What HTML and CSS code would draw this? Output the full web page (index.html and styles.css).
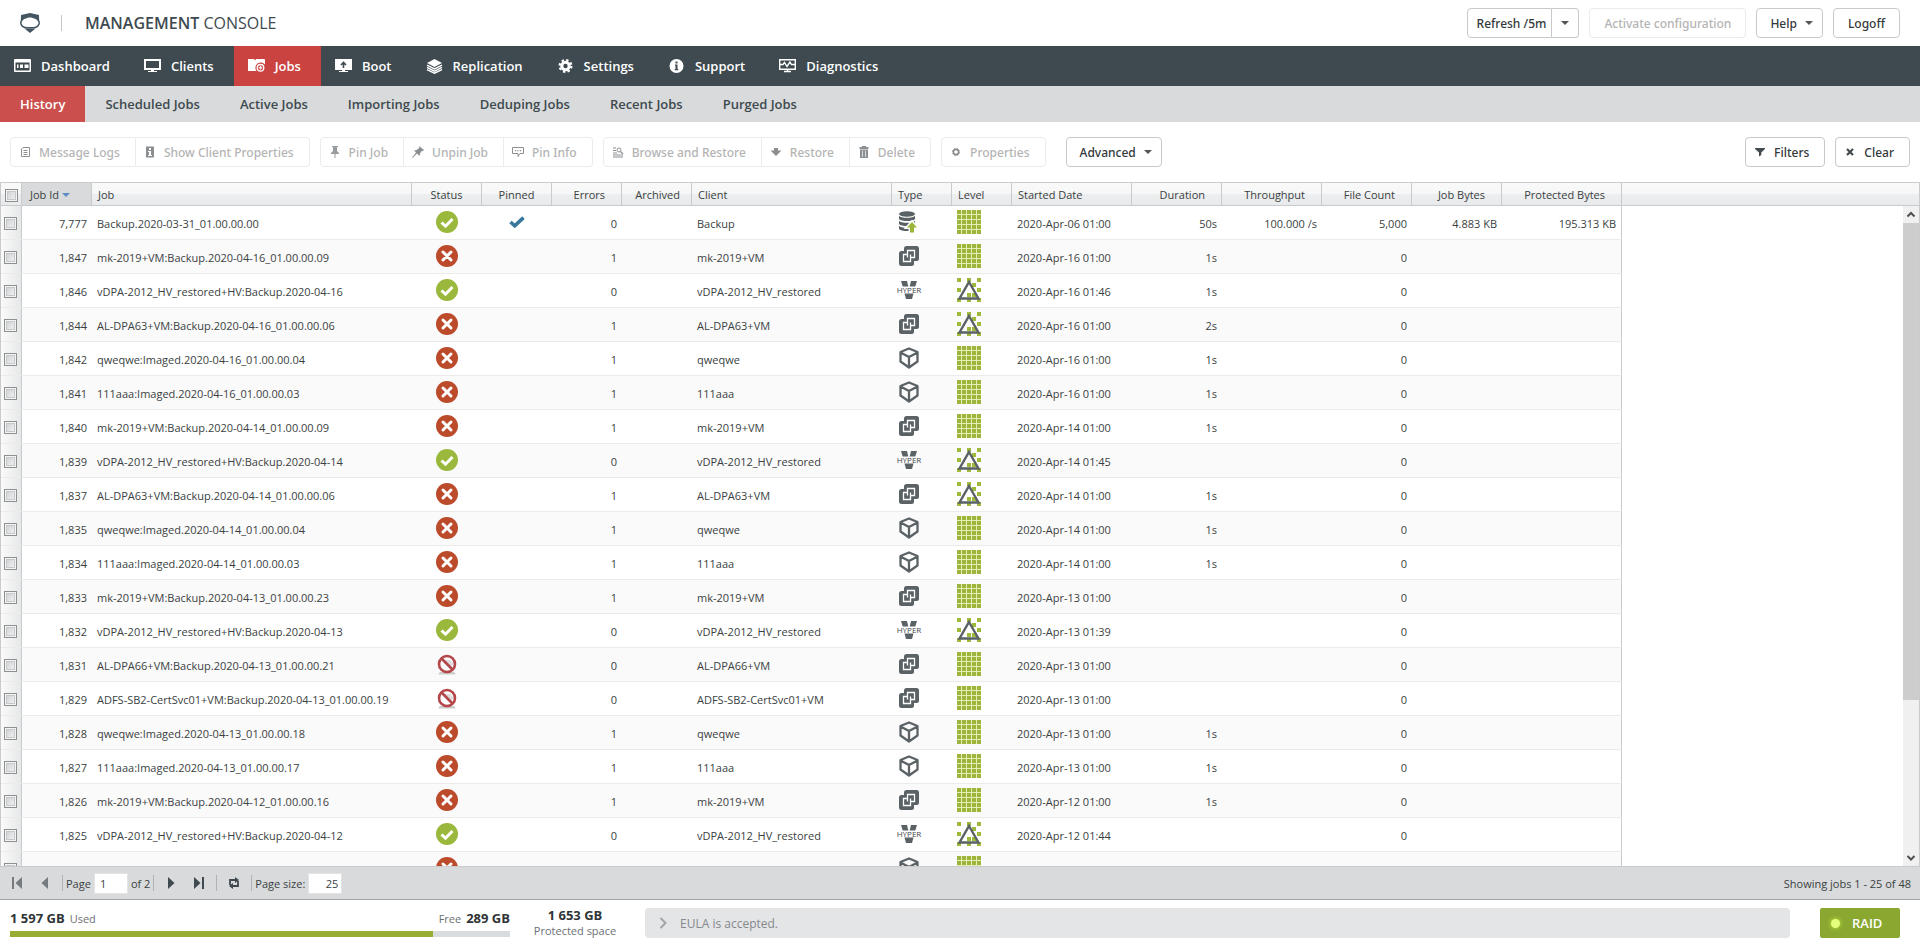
FILE: index.html
```html
<!DOCTYPE html>
<html lang="en">
<head>
  <meta charset="UTF-8" />
  <meta name="viewport" content="width=device-width, initial-scale=1.0" />
  <title>Management Console</title>
  <link rel="stylesheet" href="styles.css">
</head>
<body>

  <!-- shared icons -->
  <svg class="sprite" aria-hidden="true">
    <symbol id="i-ok" viewBox="0 0 22 22">
      <circle cx="11" cy="11" r="11" fill="#9ab83c"/>
      <path d="M5.5 11.5 9.5 15.2 16.5 8" fill="none" stroke="#fff" stroke-width="3"/>
    </symbol>
    <symbol id="i-fail" viewBox="0 0 22 22">
      <circle cx="11" cy="11" r="11" fill="#bb4b2a"/>
      <path d="M7 7l8 8M15 7l-8 8" fill="none" stroke="#fff" stroke-width="3" stroke-linecap="round"/>
    </symbol>
    <symbol id="i-cancel" viewBox="0 0 22 22">
      <path d="M2.5 21.5c0-2 2-3 4-3h9c2 0 4 1 4 3z" fill="#ccc"/>
      <path d="M8 7h6l4 4-5 4z" fill="#ddd"/>
      <circle cx="11" cy="11" r="8" fill="none" stroke="#b5474a" stroke-width="2.6"/>
      <path d="M5.5 5.5l11 11" stroke="#b5474a" stroke-width="2.6"/>
    </symbol>
    <symbol id="i-pinned" viewBox="0 0 16 12">
      <path d="M1.5 6 5.7 9.8 14.5 1.6" fill="none" stroke="#37789c" stroke-width="3.6"/>
    </symbol>
    <symbol id="i-db" viewBox="0 0 22 22">
      <g fill="#5a6266">
        <ellipse cx="9" cy="3" rx="8" ry="2.8"/>
        <path d="M1 4.800c2 2.700 14 2.700 16 0v3.200c-2 2.800-14 2.800-16 0z"/>
        <path d="M1 9.800c2 2.700 14 2.700 16 0v3.200c-2 2.800-14 2.800-16 0z"/>
        <path d="M1 14.800c2 2.700 14 2.700 16 0v3.200c-2 2.800-14 2.800-16 0z"/>
      </g>
      <path d="M14 11l5 5.500h-3v5h-4v-5H9z" fill="#9cb536" stroke="#fff" stroke-width="3" paint-order="stroke"/>
    </symbol>
    <symbol id="i-vm" viewBox="0 0 22 22">
      <rect x="6" y="1" width="15" height="15" rx="2.500" fill="#5a6266"/>
      <rect x="1" y="6" width="15" height="15" rx="2.500" fill="#5a6266"/>
      <path d="M9.500 12.500v-7h7v7h-4M12.500 9.500v7h-7v-7h4" fill="none" stroke="#fff" stroke-width="1.300"/>
    </symbol>
    <symbol id="i-hyper" viewBox="0 0 26 20">
      <path d="M5 1h6l1.300 5.500h1.400L15 1h6l-1.700 5.500H6.700zM8.500 13.500h9L16 19h-6z" fill="#5a6266"/>
      <text x="13" y="12.800" text-anchor="middle" font-size="8" fill="#3f474b">HYPER</text>
    </symbol>
    <symbol id="i-cube" viewBox="0 0 22 22">
      <path d="M11 1.500 19.500 5v9.500L11 20.500 2.500 14.500V5zM2.500 5.500 11 10l8.500-4.500M11 10v10.500" fill="none" stroke="#5a6266" stroke-width="2.300" stroke-linejoin="round"/>
    </symbol>
    <symbol id="i-full" viewBox="0 0 24 24">
      <path d="M0 0h24v24H0z" fill="#e3edb4"/>
      <path d="M0 2h24M0 7h24M0 12h24M0 17h24M0 22h24" stroke="#9db53c" stroke-width="4" stroke-dasharray="4 1"/>
    </symbol>
    <symbol id="i-diff" viewBox="0 0 24 24">
      <path d="M0 0h4v4H0zM10 0h4v4h-4zM20 0h4v4h-4zM0 10h4v4H0zM15 5h4v4h-4zM20 10h4v4h-4zM10 15h4v4h-4zM15 15h4v4h-4zM0 20h4v4H0zM10 20h4v4h-4zM20 20h4v4h-4z" fill="#9fb93b"/>
      <path d="M12 4 21.500 20.500H2.500z" fill="none" stroke="#5a6266" stroke-width="2.400"/>
    </symbol>
  </svg>

  <header class="top">
    <svg class="logo" viewBox="0 0 20 20" aria-hidden="true">
      <path d="M1 2 10 0l9 2 .2 6C17 8 16 5 14 5.500c-2-1.500-6-1.500-8 0C4 5 3 8 .8 8z" fill="#435560"/>
      <path d="M2 7C.8 8.500.6 10 1 11c.6 2 3 3.600 6 3.800h6c3-.2 5.400-1.800 6-3.800.4-1 .2-2.500-1-4" fill="none" stroke="#435560" stroke-width="1.500"/>
      <path d="M4.500 15.500h11L10 20z" fill="#435560"/>
    </svg>
    <span class="divider"></span>
    <h1><b>MANAGEMENT</b> CONSOLE</h1>
    <div class="top-actions">
      <div class="btn-group">
        <button class="btn refresh">Refresh /5m</button>
        <button class="btn split" aria-label="Refresh interval"><span class="caret"></span></button>
      </div>
      <button class="btn plain" disabled>Activate configuration</button>
      <button class="btn menu">Help <span class="caret"></span></button>
      <button class="btn plain">Logoff</button>
    </div>
  </header>

  <nav class="nav">
    <a href="#"><svg viewBox="0 0 17 16"><path fill="#fff" fill-rule="evenodd" d="M1 1h15q1 0 1 1v11q0 1-1 1H1q-1 0-1-1V2q0-1 1-1zm.5 3.500v8h14v-8z"/><path fill="#fff" d="M3 6.500h1.500V10H3zM6 6.500h3V10H6zM10.500 6.500h4V10h-4z"/></svg>Dashboard</a>
    <a href="#"><svg viewBox="0 0 17 16"><path fill="#fff" fill-rule="evenodd" d="M0 1h17v11H0zm2 2v7h13V3zM4 13h9v1H4z"/><path fill="#fff" d="M7 12h3v2H7z"/></svg>Clients</a>
    <a href="#" class="active"><svg viewBox="0 0 17 16"><path fill="#fff" d="M0 1h6l1 1.500L8 1h8q1 0 1 1v4.500a5.300 5.300 0 0 0-8.500 6.500H0z"/><circle cx="12.500" cy="9.800" r="3.300" fill="none" stroke="#fff" stroke-width="1.300"/><path d="M12.500 8v3.600M10.700 9.800h3.600" stroke="#fff" stroke-width="1.300"/></svg>Jobs</a>
    <a href="#"><svg viewBox="0 0 17 16"><path fill="#fff" d="M0 1h17v11H0zM7 12h3v1h3v1H4v-1h3z"/><path d="M8.500 4v6M6 7l2.500-2.500L11 7" stroke="#3e4a4f" stroke-width="1.600" fill="none"/></svg>Boot</a>
    <a href="#"><svg viewBox="0 0 17 16"><path fill="#fff" d="M8.500 1 16 5 8.500 9 1 5z"/><path fill="none" stroke="#fff" stroke-width="1.500" d="M1 7.200 8.500 11 16 7.200M1 9.400l7.500 3.800L16 9.400M1 11.600l7.500 3.600 7.500-3.600"/></svg>Replication</a>
    <a href="#"><svg viewBox="0 0 17 16"><circle cx="8.500" cy="8" r="3.700" fill="none" stroke="#fff" stroke-width="3"/><circle cx="8.500" cy="8" r="5.800" fill="none" stroke="#fff" stroke-width="2.400" stroke-dasharray="2.300 2.255"/></svg>Settings</a>
    <a href="#"><svg viewBox="0 0 17 16"><circle cx="8.500" cy="8" r="7" fill="#fff"/><path fill="#3e4a4f" d="M7.500 3.500h2v2h-2zM7 6.500h2.500V11h.8v1.200H6.700V11h.8V7.700H7z"/></svg>Support</a>
    <a href="#"><svg viewBox="0 0 17 16"><path fill="none" stroke="#fff" stroke-width="1.400" d="M.7 1.700h15.600v9.600H.7zM1 6.500h3l1.500-2 2.500 4 3-4.500 1.500 2.500H16M5 13.500h7M8.500 11v2"/></svg>Diagnostics</a>
  </nav>

  <nav class="subnav">
    <a href="#" class="active">History</a>
    <a href="#">Scheduled Jobs</a>
    <a href="#">Active Jobs</a>
    <a href="#">Importing Jobs</a>
    <a href="#">Deduping Jobs</a>
    <a href="#">Recent Jobs</a>
    <a href="#">Purged Jobs</a>
  </nav>

  <div class="toolbar">
    <div class="btn-group">
      <button class="btn" disabled><svg viewBox="0 0 12 12"><path d="M4 1.500h6.500v9h-8V3zM4.500 4.500h4M4.500 6.500h4M4.500 8.500h4" fill="none" stroke="#8c8f91"/></svg>Message Logs</button>
      <button class="btn" disabled><svg viewBox="0 0 12 12"><path d="M2 .5h8v11H2z" fill="#8c8f91"/><path d="M5 2h2v2H5zM4 5h3v4h1v1H4V9h1V6H4z" fill="#fff"/></svg>Show Client Properties</button>
    </div>
    <div class="btn-group">
      <button class="btn" disabled><svg viewBox="0 0 12 12"><path d="M3 0h6v1H8v4l2 2v1H6.500v4h-1V8H2V7l2-2V1H3z" fill="#9a9d9f"/></svg>Pin Job</button>
      <button class="btn" disabled><svg viewBox="0 0 12 12"><path d="M7 0l5 4-1 1-1-.3L8 7.500 7.500 10 5 7.500.5 12 0 11.500 4 6.500 2 4.500 4.500 4 7.300 2z" fill="#8c8f91"/></svg>Unpin Job</button>
      <button class="btn" disabled><svg viewBox="0 0 12 12"><path d="M.5 1.500h11v6H8L6 10.500V7.500H.5z" fill="none" stroke="#8c8f91"/><path d="M3 4h1.200v1.200H3zM5.400 4h1.200v1.200H5.400zM7.800 4H9v1.200H7.800z" fill="#8c8f91"/></svg>Pin Info</button>
    </div>
    <div class="btn-group">
      <button class="btn" disabled><svg viewBox="0 0 12 12"><path d="M1 2h3M1 4.500h3M1 7h4M1 9h10M1 11h10" stroke="#8c8f91"/><circle cx="7" cy="4" r="2" fill="none" stroke="#8c8f91"/><path d="M8.500 5.500 11 8" stroke="#8c8f91" stroke-width="1.300"/></svg>Browse and Restore</button>
      <button class="btn" disabled><svg viewBox="0 0 12 12"><path d="M4 2h4v2.500h3.500L6 10 .5 4.500H4z" fill="#8c8f91"/></svg>Restore</button>
      <button class="btn" disabled><svg viewBox="0 0 12 12"><path d="M4 0h4v1h2.500v2h-9V1H4zM2 3.500h8V12H2z" fill="#8c8f91"/><path d="M4.500 4.500V11M7.500 4.500V11" stroke="#fff" stroke-width=".7"/></svg>Delete</button>
    </div>
    <div class="btn-group">
      <button class="btn" disabled><svg viewBox="0 0 12 12"><circle cx="6" cy="6" r="2.600" fill="none" stroke="#8c8f91" stroke-width="1.600"/><circle cx="6" cy="6" r="3.600" fill="none" stroke="#8c8f91" stroke-dasharray="1.400 1.430"/></svg>Properties</button>
    </div>
    <button class="btn menu advanced">Advanced <span class="caret"></span></button>
    <div class="toolbar-right">
      <button class="btn"><svg viewBox="0 0 12 12"><path d="M1 2h10v1L7.300 6.500V9L5 10.500v-4L1 3z" fill="#444a4d"/></svg>Filters</button>
      <button class="btn"><svg viewBox="0 0 12 12"><path d="M3 3l6 6M9 3 3 9" stroke="#444a4d" stroke-width="2.200"/></svg>Clear</button>
    </div>
  </div>

  <main class="grid">
    <div class="grid-view">
      <table>
        <colgroup>
          <col class="w-sel"><col class="w-70"><col class="w-job"><col class="w-70"><col class="w-70"><col class="w-70"><col class="w-70">
          <col class="w-client"><col class="w-60"><col class="w-60"><col class="w-120"><col class="w-90"><col class="w-100"><col class="w-90"><col class="w-90"><col class="w-120"><col>
        </colgroup>
        <thead>
          <tr>
            <th class="sel"><input type="checkbox" aria-label="Select all"></th>
            <th class="sorted">Job Id <span class="caret"></span></th>
            <th>Job</th>
            <th class="center">Status</th>
            <th class="center">Pinned</th>
            <th class="num">Errors</th>
            <th class="num archived">Archived</th>
            <th>Client</th>
            <th>Type</th>
            <th>Level</th>
            <th>Started Date</th>
            <th class="num">Duration</th>
            <th class="num">Throughput</th>
            <th class="num">File Count</th>
            <th class="num">Job Bytes</th>
            <th class="num">Protected Bytes</th>
            <th class="rest"></th>
          </tr>
        </thead>
        <tbody id="jobs"></tbody>
      </table>
    </div>
    <div class="grid-side">
      <div class="side-head"></div>
      <div class="track">
        <svg viewBox="0 0 16 16"><path d="M4.500 10 8 6.500l3.500 3.500" fill="none" stroke="#505050" stroke-width="2"/></svg>
        <div class="thumb"></div>
        <svg viewBox="0 0 16 16"><path d="M4.500 6.500 8 10l3.500-3.500" fill="none" stroke="#505050" stroke-width="2"/></svg>
      </div>
    </div>
  </main>

  <div class="pager">
    <button aria-label="First page"><svg viewBox="0 0 12 12"><path d="M1 0h2v12H1zM11 0v12L4.500 6z" fill="#757b7e"/></svg></button>
    <button aria-label="Previous page"><svg viewBox="0 0 12 12"><path d="M9 0v12L2.500 6z" fill="#757b7e"/></svg></button>
    <span class="sep"></span>
    <label for="page">Page</label>
    <input type="text" id="page" value="1">
    <span class="of">of 2</span>
    <span class="sep"></span>
    <button aria-label="Next page"><svg viewBox="0 0 12 12"><path d="M3 0v12l6.500-6z" fill="#3e4a4f"/></svg></button>
    <button aria-label="Last page"><svg viewBox="0 0 12 12"><path d="M9 0h2v12H9zM1 0v12l6.500-6z" fill="#3e4a4f"/></svg></button>
    <span class="sep"></span>
    <button aria-label="Reload"><svg viewBox="0 0 12 12"><path d="M2 8V3h5M10 4v5H5" fill="none" stroke="#3e4a4f" stroke-width="1.800"/><path d="M7 0v6l4-3zM5 6v6L1 9z" fill="#3e4a4f"/></svg></button>
    <span class="sep"></span>
    <label for="size">Page size:</label>
    <input type="text" id="size" class="size" value="25">
    <span class="showing">Showing jobs 1 - 25 of 48</span>
  </div>

  <footer class="foot">
    <div class="usage">
      <div class="usage-text"><span><b>1 597 GB</b>Used</span><span>Free<b>289 GB</b></span></div>
      <div class="bar"><div class="bar-fill" style="width: 84.6%"></div></div>
    </div>
    <div class="protected"><b>1 653 GB</b><span>Protected space</span></div>
    <div class="message"><svg viewBox="0 0 12 12"><path d="M3.500 1 8.500 6l-5 5" fill="none" stroke="#9fa5a8" stroke-width="2"/></svg>EULA is accepted.</div>
    <button class="raid"><span class="led"></span>RAID</button>
  </footer>

  <script>
    // id, job, status, pinned, errors, client, type, level, started, duration, throughput, files, job bytes, protected bytes
    const jobs = [
      ["7,777", "Backup.2020-03-31_01.00.00.00", "ok", true, 0, "Backup", "db", "full", "2020-Apr-06 01:00", "50s", "100.000 /s", "5,000", "4.883 KB", "195.313 KB"],
      ["1,847", "mk-2019+VM:Backup.2020-04-16_01.00.00.09", "fail", false, 1, "mk-2019+VM", "vm", "full", "2020-Apr-16 01:00", "1s"],
      ["1,846", "vDPA-2012_HV_restored+HV:Backup.2020-04-16", "ok", false, 0, "vDPA-2012_HV_restored", "hyper", "diff", "2020-Apr-16 01:46", "1s"],
      ["1,844", "AL-DPA63+VM:Backup.2020-04-16_01.00.00.06", "fail", false, 1, "AL-DPA63+VM", "vm", "diff", "2020-Apr-16 01:00", "2s"],
      ["1,842", "qweqwe:Imaged.2020-04-16_01.00.00.04", "fail", false, 1, "qweqwe", "cube", "full", "2020-Apr-16 01:00", "1s"],
      ["1,841", "111aaa:Imaged.2020-04-16_01.00.00.03", "fail", false, 1, "111aaa", "cube", "full", "2020-Apr-16 01:00", "1s"],
      ["1,840", "mk-2019+VM:Backup.2020-04-14_01.00.00.09", "fail", false, 1, "mk-2019+VM", "vm", "full", "2020-Apr-14 01:00", "1s"],
      ["1,839", "vDPA-2012_HV_restored+HV:Backup.2020-04-14", "ok", false, 0, "vDPA-2012_HV_restored", "hyper", "diff", "2020-Apr-14 01:45", ""],
      ["1,837", "AL-DPA63+VM:Backup.2020-04-14_01.00.00.06", "fail", false, 1, "AL-DPA63+VM", "vm", "diff", "2020-Apr-14 01:00", "1s"],
      ["1,835", "qweqwe:Imaged.2020-04-14_01.00.00.04", "fail", false, 1, "qweqwe", "cube", "full", "2020-Apr-14 01:00", "1s"],
      ["1,834", "111aaa:Imaged.2020-04-14_01.00.00.03", "fail", false, 1, "111aaa", "cube", "full", "2020-Apr-14 01:00", "1s"],
      ["1,833", "mk-2019+VM:Backup.2020-04-13_01.00.00.23", "fail", false, 1, "mk-2019+VM", "vm", "full", "2020-Apr-13 01:00", ""],
      ["1,832", "vDPA-2012_HV_restored+HV:Backup.2020-04-13", "ok", false, 0, "vDPA-2012_HV_restored", "hyper", "diff", "2020-Apr-13 01:39", ""],
      ["1,831", "AL-DPA66+VM:Backup.2020-04-13_01.00.00.21", "cancel", false, 0, "AL-DPA66+VM", "vm", "full", "2020-Apr-13 01:00", ""],
      ["1,829", "ADFS-SB2-CertSvc01+VM:Backup.2020-04-13_01.00.00.19", "cancel", false, 0, "ADFS-SB2-CertSvc01+VM", "vm", "full", "2020-Apr-13 01:00", ""],
      ["1,828", "qweqwe:Imaged.2020-04-13_01.00.00.18", "fail", false, 1, "qweqwe", "cube", "full", "2020-Apr-13 01:00", "1s"],
      ["1,827", "111aaa:Imaged.2020-04-13_01.00.00.17", "fail", false, 1, "111aaa", "cube", "full", "2020-Apr-13 01:00", "1s"],
      ["1,826", "mk-2019+VM:Backup.2020-04-12_01.00.00.16", "fail", false, 1, "mk-2019+VM", "vm", "full", "2020-Apr-12 01:00", "1s"],
      ["1,825", "vDPA-2012_HV_restored+HV:Backup.2020-04-12", "ok", false, 0, "vDPA-2012_HV_restored", "hyper", "diff", "2020-Apr-12 01:44", ""],
      ["", "", "fail", false, "", "", "cube", "full", "", "", "", " "]
    ];

    const icon = (name) => `<svg class="icon ${name}"><use href="#i-${name}"/></svg>`;

    document.getElementById("jobs").innerHTML = jobs.map((j) => `
      <tr>
        <td class="sel"><input type="checkbox" aria-label="Select job ${j[0]}"></td>
        <td class="num">${j[0]}</td>
        <td>${j[1]}</td>
        <td class="center">${icon(j[2])}</td>
        <td class="center">${j[3] ? icon("pinned") : ""}</td>
        <td class="num">${j[4]}</td>
        <td></td>
        <td>${j[5]}</td>
        <td class="type">${icon(j[6])}</td>
        <td class="level">${icon(j[7])}</td>
        <td>${j[8]}</td>
        <td class="num">${j[9]}</td>
        <td class="num">${j[10] || ""}</td>
        <td class="num">${j[11] || "0"}</td>
        <td class="num">${j[12] || ""}</td>
        <td class="num last">${j[13] || ""}</td>
        <td class="rest"></td>
      </tr>`).join("");
  </script>
</body>
</html>
```

FILE: styles.css
```css
* {
  box-sizing: border-box;
}

body {
  margin: 0;
  height: 100vh;
  display: flex;
  flex-direction: column;
  overflow: hidden;
  font-family: "Open Sans", sans-serif;
  font-size: 13px;
  color: #3a3f42;
  background: #fff;
}

button, input {
  font-family: inherit;
  font-size: inherit;
  color: inherit;
}

.sprite {
  display: none;
}

/* top bar */
.top {
  display: flex;
  align-items: center;
  height: 46px;
  padding: 0 20px;
  flex: none;
}

.logo {
  width: 20px;
  height: 20px;
}

.divider {
  width: 1px;
  height: 16px;
  margin: 0 23px 0 21px;
  background: #c4c6c7;
}

h1 {
  margin: 0;
  font-size: 16px;
  font-weight: 500;
  color: #3e4a4f;
}

h1 b {
  font-weight: 600;
}

.top-actions {
  display: flex;
  gap: 10px;
  margin-left: auto;
}

/* buttons */
.btn {
  display: flex;
  align-items: center;
  height: 30px;
  padding: 0 15px 0 8px;
  border: 1px solid #c9c9c9;
  border-radius: 4px;
  background: #fff;
  color: #33383a;
  font-family: "Noto Sans", "Open Sans", sans-serif;
  font-size: 12px;
  font-weight: 500;
  white-space: nowrap;
}

.btn svg {
  width: 12px;
  height: 12px;
  margin-right: 8px;
}

.btn:disabled {
  color: #b4b4b4;
  border-color: #ebebeb;
}

.btn.plain {
  padding: 0 14px;
}

.btn.refresh {
  padding: 0 5px 0 9px;
}

.btn.split {
  padding: 0 9px;
}

.btn .caret {
  margin-left: 8px;
}

.btn.split .caret {
  margin-left: 0;
}

.btn.menu {
  padding: 0 9px 0 13px;
}

.btn.advanced {
  margin-left: 10px;
}

.btn-group {
  display: flex;
}

.btn-group .btn + .btn {
  border-left: 0;
}

.btn-group .btn:not(:first-child) {
  border-top-left-radius: 0;
  border-bottom-left-radius: 0;
}

.btn-group .btn:not(:last-child) {
  border-top-right-radius: 0;
  border-bottom-right-radius: 0;
}

.caret {
  display: inline-block;
  border: 4px solid transparent;
  border-top-color: #555;
  border-bottom: 0;
}

/* navigation */
.nav {
  display: flex;
  height: 40px;
  flex: none;
  background: #3e4a4f;
}

.nav a {
  display: flex;
  align-items: center;
  padding: 0 20px 0 14px;
  color: #fff;
  font-weight: 600;
  text-decoration: none;
}

.nav a.active {
  background: #ca4341;
}

.nav svg {
  width: 17px;
  height: 16px;
  margin-right: 10px;
}

.subnav {
  display: flex;
  height: 36px;
  flex: none;
  background: #d8dadb;
}

.subnav a {
  display: flex;
  align-items: center;
  padding: 0 20px;
  color: #3e4a4f;
  font-weight: 600;
  text-decoration: none;
}

.subnav a.active {
  background: #cb504d;
  color: #fff;
}

.toolbar {
  display: flex;
  align-items: center;
  gap: 10px;
  height: 60px;
  flex: none;
  padding: 0 10px;
}

.toolbar-right {
  display: flex;
  gap: 10px;
  margin-left: auto;
}

/* jobs grid */
.grid {
  display: flex;
  flex: 1;
  min-height: 0;
  border: solid #c9cbcc;
  border-width: 0 1px;
}

.grid-view {
  flex: 1;
  min-width: 0;
  overflow: hidden;
}

table {
  width: 100%;
  table-layout: fixed;
  border-collapse: separate;
  border-spacing: 0;
  font-size: 11px;
}

.w-sel { width: 21px; }
.w-60 { width: 60px; }
.w-70 { width: 70px; }
.w-90 { width: 90px; }
.w-100 { width: 100px; }
.w-120 { width: 120px; }
.w-client { width: 200px; }
.w-job { width: 320px; }

th, .side-head {
  height: 24px;
  border: solid #c9cbcc;
  border-width: 1px 0;
  background: linear-gradient(#f9f9f9 0%, #f6f7f7 50%, #eceeef 50%, #e8eaeb 100%);
}

th {
  padding: 1px 6px 0;
  border-right-width: 1px;
  font-weight: 400;
  text-align: left;
  white-space: nowrap;
}

th.num {
  padding-right: 16px;
}

th.archived {
  padding-right: 11px;
}

th.sorted {
  padding-left: 8px;
  background: #d8dadb;
}

th.sorted .caret {
  border-top-color: #5c8dc4;
  vertical-align: 2px;
}

th.rest {
  border-right: 0;
}

td {
  height: 34px;
  padding: 2px 5px 0;
  border-bottom: 1px solid #ebebeb;
  white-space: nowrap;
}

td.last {
  border-right: 1px solid #c9cbcc;
}

td.rest {
  border: 0;
  background: #fff;
}

tbody tr:nth-child(even) {
  background: #fafafa;
}

.num {
  text-align: right;
}

th.center, td.center {
  text-align: center;
}

th.sel {
  padding: 2px 0 0 1px;
}

td.sel {
  padding: 2px 0 0;
  background: linear-gradient(to right, #fafafa, #e6e7e8);
  border-right: 1px solid #c9cbcc;
}

td.type {
  padding: 0 6px 2px;
}

td.level {
  padding: 0 5px 1px;
}

input[type="checkbox"] {
  appearance: none;
  display: block;
  width: 13px;
  height: 13px;
  margin: 0 3px;
  border: 1px solid #8e8f8f;
  background: linear-gradient(135deg, #c9cdd0, #f6f6f6);
  box-shadow: inset 0 0 0 1px #f4f4f4, inset 0 0 0 2px #c5c9cc;
}

.icon {
  display: block;
  width: 22px;
  height: 22px;
}

.center .icon {
  margin: 0 auto;
}

td.center {
  padding: 0 5px 2px;
}

.icon.pinned {
  width: 16px;
  height: 12px;
}

.icon.hyper {
  width: 26px;
  height: 20px;
  margin-left: -2px;
}

.icon.full, .icon.diff {
  width: 24px;
  height: 24px;
}

.grid-side {
  display: flex;
  flex-direction: column;
  width: 16px;
}

.track {
  display: flex;
  flex-direction: column;
  flex: 1;
  background: #f0f0f0;
}

.track svg {
  width: 16px;
  height: 17px;
}

.thumb {
  height: 477px;
  margin-bottom: auto;
  background: #cdcdcd;
}

/* pager */
.pager {
  display: flex;
  align-items: center;
  height: 34px;
  flex: none;
  padding: 0 9px 0 3px;
  border-top: 1px solid #c9cbcc;
  border-bottom: 1px solid #a3a6a8;
  background: #d8dadb;
  font-size: 11px;
}

.pager button {
  display: flex;
  width: 28px;
  padding: 0 8px;
  border: 0;
  background: none;
}

.pager svg {
  width: 12px;
  height: 12px;
  flex: none;
}

.pager .sep {
  width: 1px;
  height: 16px;
  margin: 0 3px;
  background: #b0b3b5;
}

.pager input {
  width: 34px;
  height: 21px;
  margin: 0 3px;
  padding: 0 5px;
  border: 1px solid #e3e4e5;
  background: #fff;
}

.pager .size {
  padding: 0 3px;
  text-align: right;
}

.showing {
  margin-left: auto;
}

/* footer */
.foot {
  display: flex;
  align-items: center;
  height: 46px;
  flex: none;
  padding: 0 20px 0 10px;
  font-size: 11px;
  color: #6b7073;
}

.foot b {
  font-size: 13px;
  color: #2f3436;
}

.usage {
  width: 500px;
}

.usage-text {
  display: flex;
  justify-content: space-between;
}

.usage-text span {
  display: flex;
  align-items: baseline;
  gap: 5px;
}

.bar {
  height: 6px;
  margin-top: 4px;
  background: #d8dcde;
}

.bar-fill {
  height: 6px;
  background: #97ad33;
}

.protected {
  display: flex;
  flex-direction: column;
  align-items: center;
  width: 130px;
  line-height: 16px;
}

.message {
  display: flex;
  align-items: center;
  flex: 1;
  height: 30px;
  margin: 0 30px 0 5px;
  padding: 0 12px;
  border-radius: 4px;
  background: #e4e5e7;
  color: #85898c;
  font-size: 12px;
}

.message svg {
  width: 12px;
  height: 12px;
  margin-right: 11px;
}

.raid {
  display: flex;
  align-items: center;
  width: 80px;
  height: 30px;
  padding: 0 11px;
  border: 0;
  border-radius: 2px;
  background: #8aa830;
  color: #fff;
  font-size: 13px;
  font-weight: 600;
}

.led {
  width: 9px;
  height: 9px;
  margin-right: 12px;
  border-radius: 50%;
  background: #e4ff7d;
  box-shadow: 0 0 4px #c8f03c;
}
```
